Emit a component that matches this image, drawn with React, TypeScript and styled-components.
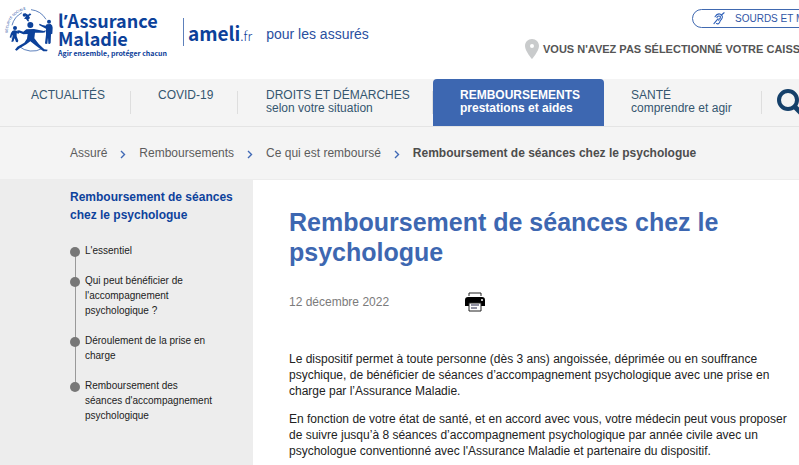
import React from "react";
import styled, { createGlobalStyle } from "styled-components";

const GlobalStyle = createGlobalStyle`
  *, *::before, *::after { box-sizing: border-box; }
  body {
    margin: 0;
    overflow-x: hidden;
    background: #ffffff;
    color: #222222;
    font-family: "Liberation Sans", Arial, sans-serif;
    font-size: 12px;
    line-height: 16px;
  }
  a { color: inherit; text-decoration: none; }
  ul, ol, p, h1, h2 { margin: 0; padding: 0; }
  ul, ol { list-style: none; }
  button { font: inherit; cursor: pointer; }
`;

const Page = styled.div`
  overflow: hidden;
  white-space: nowrap;
`;

const Header = styled.header`
  display: flex;
  justify-content: space-between;
  height: 79px;
`;

const Brand = styled.a`
  display: flex;
  flex: none;
  color: #0c419a;
  font-family: "Noto Sans CJK SC", "Noto Sans", sans-serif;
`;

const Emblem = styled.svg`
  width: 60px;
  height: 60px;
  flex: none;
`;

const BrandText = styled.span`
  display: flex;
  flex-direction: column;
  width: 125px;
  margin-left: -2px;
  padding-top: 12px;
`;

const BrandName = styled.span`
  font-size: 18px;
  font-weight: 700;
  line-height: 17px;
`;

const Apostrophe = styled.span`
  font-family: "Noto Sans", sans-serif;
  line-height: 1;
`;

const Motto = styled.span`
  font-size: 7px;
  font-weight: 700;
  line-height: 12px;
`;

const Site = styled.span`
  align-self: flex-start;
  height: 28px;
  margin-top: 18px;
  padding-left: 4px;
  border-left: 1px solid #5d80bb;
  font-size: 19px;
  line-height: 29px;
`;

const Suffix = styled.span`
  font-size: 13px;
  font-weight: 300;
`;

const Audience = styled.span`
  margin: 26px 0 0 14px;
  color: #2a4f9f;
  font-family: "Liberation Sans", Arial, sans-serif;
  font-size: 14px;
`;

const Tools = styled.div`
  display: flex;
  flex-direction: column;
  flex: none;
  width: 274px;
`;

const Pill = styled.button`
  display: flex;
  align-items: center;
  align-self: flex-start;
  gap: 10px;
  height: 19px;
  margin: 9px 0 0 167px;
  padding: 0 20px;
  border: 1px solid #4069b0;
  border-radius: 10px;
  background: #ffffff;
  color: #2f55a5;
  font-size: 10px;
  white-space: nowrap;
`;

const Office = styled.a`
  display: flex;
  align-items: center;
  gap: 4px;
  margin-top: 11px;
  color: #555555;
  font-size: 11px;
  font-weight: 700;

  svg { flex: none; }
`;

const Nav = styled.nav`
  display: flex;
  height: 48px;
  border-bottom: 1px solid #e4e4e4;
  background: #f4f4f4;
  color: #34566f;
`;

const NavItem = styled.a<{ $before: number; $width: number; $active?: boolean }>`
  display: flex;
  flex-direction: column;
  flex: none;
  position: relative;
  width: ${(p) => p.$width}px;
  padding: 10px 0 0 ${(p) => p.$before}px;
  border-radius: ${(p) => (p.$active ? "4px 4px 0 0" : "0")};
  background: ${(p) => (p.$active ? "#3d67b1" : "transparent")};
  color: ${(p) => (p.$active ? "#ffffff" : "inherit")};
  font-weight: ${(p) => (p.$active ? 700 : 400)};
  line-height: 13px;

  &::after {
    content: "";
    display: ${(p) => (p.$active ? "none" : "block")};
    position: absolute;
    top: 12px;
    right: 0;
    width: 1px;
    height: 23px;
    background: #dedede;
  }
`;

const SearchButton = styled.button`
  display: flex;
  flex: none;
  margin-left: 14px;
  padding: 9px 0 0;
  border: 0;
  background: none;
  color: #15406a;
`;

const Breadcrumb = styled.nav`
  padding: 18px 0 18px 70px;
  border-bottom: 1px solid #ececec;
  background: #f4f4f4;
  color: #5c5c5c;
`;

const Trail = styled.ol`
  display: flex;
  align-items: center;
`;

const Crumb = styled.li`
  display: flex;
  align-items: center;

  &[aria-current] { color: #4d4d4d; font-weight: 700; }
`;

const Chevron = styled.svg`
  width: 6px;
  height: 9px;
  margin: 2px 13px 0;
`;

const Columns = styled.div`
  display: grid;
  grid-template-columns: 253px 1fr;
  min-height: calc(100vh - 180px);
`;

const Sidebar = styled.aside`
  padding: 8px 0 44px 70px;
  background: #ededed;
`;

const SideTitle = styled.h2`
  color: #0d429c;
  font-size: 12px;
  line-height: 18px;
`;

const Steps = styled.ul`
  margin-top: 19px;
  font-size: 10px;
  line-height: 15px;
`;

const Step = styled.li`
  position: relative;
  padding: 0 0 15px 15px;

  &::before {
    content: "";
    position: absolute;
    z-index: 1;
    top: 4px;
    left: 0;
    width: 10px;
    height: 10px;
    border-radius: 50%;
    background: #777777;
  }

  &:not(:last-child)::after {
    content: "";
    position: absolute;
    top: 8px;
    bottom: -8px;
    left: 5px;
    width: 1px;
    background: #999999;
  }
`;

const Article = styled.main`
  min-width: 0;
  padding: 27px 0 0 36px;
`;

const Title = styled.h1`
  color: #3d67b1;
  font-size: 25px;
  line-height: 30px;
`;

const Meta = styled.div`
  display: flex;
  align-items: center;
  gap: 76px;
  margin: 25px 0 39px;
  color: #7b7b7b;
`;

const PrintButton = styled.button`
  display: flex;
  padding: 0;
  border: 0;
  background: none;
`;

const Paragraph = styled.p`
  margin-bottom: 12px;
`;

const EmblemArt = () => (
  <Emblem viewBox="0 0 180 180" fill="#0c419a" stroke="#0c419a" aria-hidden="true">
    <g fill="none" strokeWidth="2">
      <path d="M36 76A60 60 0 0 1 66 38" />
      <path d="M93 29A60 60 0 0 1 138 58" />
      <path d="M57 139A62 62 0 0 0 126 146" />
      <path d="M35 108Q36 117 41 124" />
    </g>
    <path id="ring" d="M23 99A71 71 0 0 1 102 26" fill="none" stroke="none" />
    <text fontSize="10" stroke="none" fontFamily="Liberation Sans">
      <textPath href="#ring">SÉCURITÉ SOCIALE</textPath>
    </text>
    <g stroke="none">
      <circle cx="91" cy="75" r="9" />
      <path d="M79 88L102 87L132 93L137 90L136 97L129 98L105 98L103 115L117 133L133 148L143 149L141 154L130 154L106 136L91 124L79 133L59 145L50 152L45 149L52 140L73 128L81 116L83 102L70 103L54 96L50 92L57 91L70 95Z" />
      <circle cx="45" cy="84" r="6" />
      <path d="M37 93Q44 89 51 93L59 97L56 101L50 100L50 109L55 122L53 127L48 126L44 115L39 125L34 125L38 110L37 104L32 114L29 112L33 99Z" />
      <circle cx="147" cy="65" r="6" />
      <path d="M140 73L152 72Q158 75 158 83L157 101L153 103L152 129L149 132L145 131L144 113L142 131L137 132L135 129L138 104L138 86L124 79L117 75L119 71L127 75L137 77Z" />
      <circle cx="73" cy="45" r="5" />
      <path d="M75 39L84 44L90 40L94 44L87 48L90 54L85 59L88 64L83 64L78 57L72 56L77 50Z" />
    </g>
  </Emblem>
);

const EarIcon = () => (
  <svg width="12" height="13" viewBox="0 0 32 36" fill="none" stroke="#2f60b8" strokeWidth="3" strokeLinecap="round" aria-hidden="true">
    <path d="M5 13Q11 3 20 6Q29 11 23 20Q19 23 18 28Q15 35 9 32" />
    <path d="M10 15Q15 8 20 13Q21 18 16 20L15 23" />
    <path d="M30 2L22 9M13 19L2 32" />
  </svg>
);

const PinIcon = () => (
  <svg width="14" height="20" viewBox="0 0 14 20" aria-hidden="true">
    <path fillRule="evenodd" fill="#c9cbcc" d="M7 0C3 0 0 3 0 7c0 5 7 13 7 13s7-8 7-13c0-4-3-7-7-7zm0 5a2 2 0 1 1 0 4 2 2 0 0 1 0-4z" />
  </svg>
);

const SearchIcon = () => (
  <svg width="27" height="27" viewBox="0 0 27 27" fill="none" stroke="currentColor" aria-hidden="true">
    <circle cx="12" cy="12" r="9" strokeWidth="4" />
    <path d="M18 18L25 25" strokeWidth="5" />
  </svg>
);

const PrintIcon = () => (
  <svg width="20" height="20" viewBox="0 0 20 20" aria-hidden="true">
    <path d="M4 4V1H16V4" fill="none" stroke="#222222" />
    <path d="M3 5H17Q20 5 20 8V14H16V11H4V14H0V8Q0 5 3 5Z" fill="#000000" />
    <circle cx="17" cy="8" r="1" fill="#ffffff" />
    <path d="M4 11H16V19H4Z" fill="#ffffff" stroke="#222222" />
    <path d="M6 13H14M6 16H12" stroke="#222244" />
  </svg>
);

const navItems = [
  { label: "ACTUALITÉS", before: 31, width: 131 },
  { label: "COVID-19", before: 27, width: 107 },
  { label: "DROITS ET DÉMARCHES", sub: "selon votre situation", before: 28, width: 195 },
  { label: "REMBOURSEMENTS", sub: "prestations et aides", before: 27, width: 171, active: true },
  { label: "SANTÉ", sub: "comprendre et agir", before: 27, width: 158 },
];

const crumbs = ["Assuré", "Remboursements", "Ce qui est remboursé"];

const steps = [
  ["L'essentiel"],
  ["Qui peut bénéficier de", "l'accompagnement", "psychologique ?"],
  ["Déroulement de la prise en", "charge"],
  ["Remboursement des", "séances d'accompagnement", "psychologique"],
];

const paragraphs = [
  [
    "Le dispositif permet à toute personne (dès 3 ans) angoissée, déprimée ou en souffrance",
    "psychique, de bénéficier de séances d’accompagnement psychologique avec une prise en",
    "charge par l’Assurance Maladie.",
  ],
  [
    "En fonction de votre état de santé, et en accord avec vous, votre médecin peut vous proposer",
    "de suivre jusqu’à 8 séances d’accompagnement psychologique par année civile avec un",
    "psychologue conventionné avec l'Assurance Maladie et partenaire du dispositif.",
  ],
];

const Lines = ({ lines }: { lines: string[] }) => (
  <>
    {lines.map((line, i) => (
      <React.Fragment key={line}>
        {i > 0 && <br />}
        {line}
      </React.Fragment>
    ))}
  </>
);

export default function App() {
  return (
    <Page>
      <GlobalStyle />
      <Header>
        <Brand href="#accueil">
          <EmblemArt />
          <BrandText>
            <BrandName>
              l<Apostrophe>’</Apostrophe>Assurance
            </BrandName>
            <BrandName>Maladie</BrandName>
            <Motto>Agir ensemble, protéger chacun</Motto>
          </BrandText>
          <Site>
            <b>ameli</b>
            <Suffix>.fr</Suffix>
          </Site>
          <Audience>pour les assurés</Audience>
        </Brand>
        <Tools>
          <Pill type="button">
            <EarIcon />
            SOURDS ET MALENTENDANTS
          </Pill>
          <Office href="#caisse">
            <PinIcon />
            VOUS N'AVEZ PAS SÉLECTIONNÉ VOTRE CAISSE
          </Office>
        </Tools>
      </Header>
      <Nav aria-label="Menu principal">
        {navItems.map((item) => (
          <NavItem key={item.label} href="#menu" $before={item.before} $width={item.width} $active={item.active}>
            <span>{item.label}</span>
            {item.sub && <span>{item.sub}</span>}
          </NavItem>
        ))}
        <SearchButton type="button" aria-label="Rechercher">
          <SearchIcon />
        </SearchButton>
      </Nav>
      <Breadcrumb aria-label="Fil d'Ariane">
        <Trail>
          {crumbs.map((crumb) => (
            <Crumb key={crumb}>
              <a href="#fil">{crumb}</a>
              <Chevron viewBox="0 0 6 9" fill="none" stroke="#4069b5" strokeWidth="1.4" aria-hidden="true">
                <path d="M1 1L4.5 4.5L1 8" />
              </Chevron>
            </Crumb>
          ))}
          <Crumb aria-current="page">Remboursement de séances chez le psychologue</Crumb>
        </Trail>
      </Breadcrumb>
      <Columns>
        <Sidebar>
          <SideTitle>
            <Lines lines={["Remboursement de séances", "chez le psychologue"]} />
          </SideTitle>
          <Steps>
            {steps.map((lines) => (
              <Step key={lines[0]}>
                <a href="#section">
                  <Lines lines={lines} />
                </a>
              </Step>
            ))}
          </Steps>
        </Sidebar>
        <Article>
          <Title>
            <Lines lines={["Remboursement de séances chez le", "psychologue"]} />
          </Title>
          <Meta>
            <time dateTime="2022-12-12">12 décembre 2022</time>
            <PrintButton type="button" aria-label="Imprimer">
              <PrintIcon />
            </PrintButton>
          </Meta>
          {paragraphs.map((lines) => (
            <Paragraph key={lines[0]}>
              <Lines lines={lines} />
            </Paragraph>
          ))}
        </Article>
      </Columns>
    </Page>
  );
}
